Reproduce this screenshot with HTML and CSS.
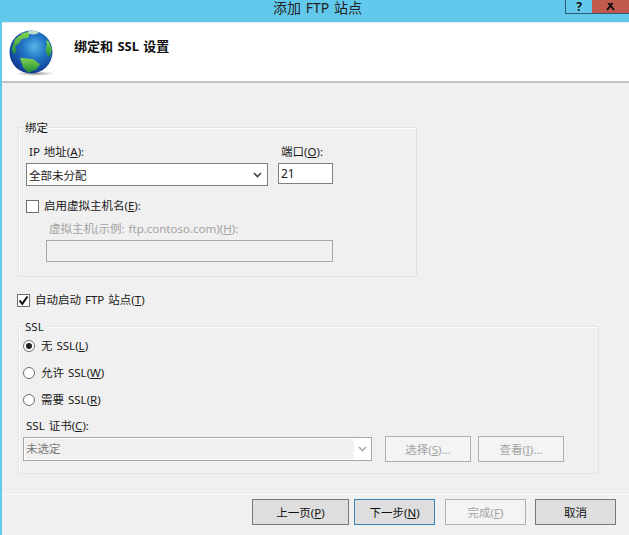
FILE: index.html
```html
<!DOCTYPE html>
<html lang="zh-CN">
<head>
<meta charset="utf-8">
<title>添加 FTP 站点</title>
<link rel="stylesheet" href="styles.css">
</head>
<body>
<div class="window">
  <div class="titlebar">
    <div class="title">添加 FTP 站点</div>
    <div class="caption">
      <div class="cap help">?</div>
      <div class="cap close">
        <svg width="11" height="8" viewBox="0 0 11 8"><path d="M2 -2L9 7M9 -2L2 7" stroke="#111" stroke-width="2" fill="none"/></svg>
      </div>
    </div>
  </div>
  <div class="client">
    <header class="banner">
      <svg class="globe" width="48" height="48" viewBox="0 0 48 48">
        <defs>
          <radialGradient id="ocean" cx="0.58" cy="0.38" r="0.68">
            <stop offset="0" stop-color="#58b4e6"/>
            <stop offset="0.4" stop-color="#2276c6"/>
            <stop offset="0.85" stop-color="#12429a"/>
            <stop offset="1" stop-color="#0d2f7c"/>
          </radialGradient>
          <radialGradient id="shade" cx="0.5" cy="0.5" r="0.5">
            <stop offset="0" stop-color="#555" stop-opacity="0.7"/>
            <stop offset="1" stop-color="#888" stop-opacity="0"/>
          </radialGradient>
          <linearGradient id="land" x1="0" y1="0" x2="0" y2="1">
            <stop offset="0" stop-color="#86d650"/>
            <stop offset="1" stop-color="#1c8a3a"/>
          </linearGradient>
        </defs>
        <ellipse cx="26" cy="45.5" rx="20" ry="2.5" fill="url(#shade)"/>
        <circle cx="22" cy="24" r="21.5" fill="url(#ocean)"/>
        <path d="M2.7 21L6 11.3 14.3 4.7 21 4 19.3 9.7 12.7 11.3 9.3 16.3 6 18 7.7 23 4.3 26.3z" fill="url(#land)"/>
        <path d="M19 3.2L26 2.6 30 5 25 6.5 20 6z" fill="#c4ddc8"/>
        <path d="M37 12L40 14 43 21 41.5 27 39 29 36.5 22 38 17z" fill="url(#land)"/>
        <path d="M11 29.7L24.3 31.3 31 36.3 27.7 41.3 19.3 44.7 14.3 39.7z" fill="url(#land)"/>
      </svg>
      <h1 class="banner-text">绑定和 SSL 设置</h1>
    </header>
    <main class="content">
      <section class="group bind">
        <span class="legend">绑定</span>
        <div class="bind-row">
          <div class="field-ip">
            <label class="lbl ip-lbl">IP 地址(<u>A</u>):</label>
            <div class="select">
              <span>全部未分配</span>
              <svg width="9" height="6" viewBox="0 0 9 6"><path d="M1 1l3.5 3.5L8 1" stroke="#444" stroke-width="1.6" fill="none"/></svg>
            </div>
          </div>
          <div class="field-port">
            <label class="lbl">端口(<u>O</u>):</label>
            <div class="input">21</div>
          </div>
        </div>
        <div class="check-row host-check">
          <span class="box"></span>
          <span class="lbl">启用虚拟主机名(<u>E</u>):</span>
        </div>
        <div class="lbl dim host-lbl">虚拟主机(示例: ftp.contoso.com)(<u>H</u>):</div>
        <div class="input-dis"></div>
      </section>

      <div class="check-row auto">
        <span class="box">
          <svg width="11" height="11" viewBox="0 0 11 11"><path d="M1.5 5.5L4.3 8.8 9.5 1.5" stroke="#111" stroke-width="2" fill="none"/></svg>
        </span>
        <span class="lbl">自动启动 FTP 站点(<u>T</u>)</span>
      </div>

      <section class="group ssl">
        <span class="legend">SSL</span>
        <div class="radio-row first"><span class="radio on"></span><span class="lbl">无 SSL(<u>L</u>)</span></div>
        <div class="radio-row"><span class="radio"></span><span class="lbl">允许 SSL(<u>W</u>)</span></div>
        <div class="radio-row"><span class="radio"></span><span class="lbl">需要 SSL(<u>R</u>)</span></div>
        <div class="lbl cert-lbl">SSL 证书(<u>C</u>):</div>
        <div class="cert-row">
          <div class="select-dis">
            <span class="sel-val">未选定</span>
            <span class="sel-arrow"><svg width="9" height="6" viewBox="0 0 9 6"><path d="M1 1l3.5 3.5L8 1" stroke="#aaa" stroke-width="1.6" fill="none"/></svg></span>
          </div>
          <div class="btn dis cert-btn">选择(<u>S</u>)...</div>
          <div class="btn dis cert-btn">查看(<u>I</u>)...</div>
        </div>
      </section>
    </main>
    <footer class="footer">
      <div class="btn w97">上一页(<u>P</u>)</div>
      <div class="btn w81 default">下一步(<u>N</u>)</div>
      <div class="btn w81 dis">完成(<u>F</u>)</div>
      <div class="btn w81">取消</div>
    </footer>
  </div>
</div>
</body>
</html>
```
FILE: styles.css
```css
* { box-sizing: border-box; }
html, body { margin: 0; padding: 0; }
body {
  width: 629px;
  height: 535px;
  overflow: hidden;
  background: #f0f0f0;
  font-family: "Noto Sans", "Noto Sans CJK SC", sans-serif;
  font-size: 11.5px;
  word-spacing: 1px;
  color: #1a1a1a;
}
.window { display: flex; flex-direction: column; height: 535px; background: #62c9ec; }
.titlebar { position: relative; height: 22px; flex: none; display: flex; justify-content: center; }
.title { font-size: 14px; line-height: 16px; color: #222; margin-left: 6px; }
.caption { position: absolute; top: 0; right: 0; display: flex; }
.cap { height: 14px; display: flex; align-items: flex-end; justify-content: center; }
.help {
  width: 27px;
  border: 1px solid #2c5d70;
  border-top: 0;
  border-right: 0;
  background: #62c9ec;
  font-weight: 700;
  font-size: 12px;
  line-height: 13px;
  color: #111;
}
.close { width: 37px; background: #c25a4f; border-bottom: 1px solid #2c5d70; }
.close svg { margin-bottom: 2px; }
.client { flex: 1; margin-left: 2px; background: #f0f0f0; display: flex; flex-direction: column; min-height: 0; }
.banner {
  height: 61px;
  flex: none;
  background: #fff;
  border-top: 1px solid #dfe8ec;
  border-bottom: 2px solid #c4c4c4;
  display: flex;
  align-items: flex-start;
}
.globe { margin: 5px 0 0 7px; flex: none; }
.banner-text { margin: 14px 0 0 17px; font-size: 13px; line-height: 18px; font-weight: 700; color: #111; }
.content { flex: 1; padding: 44px 0 0 16px; position: relative; }
.group { position: relative; border: 1px solid #dde4e8; border-radius: 2px; background: #f0f0f0; box-shadow: 1px 1px 0 #fff inset; }
.legend { position: absolute; top: -7px; left: 4px; padding: 0 2px; line-height: 14px; background: #f0f0f0; }
.lbl { line-height: 14px; white-space: nowrap; }
.lbl u { text-underline-offset: 1px; }
.bind { width: 399px; height: 150px; padding: 17px 0 0 7px; }
.bind-row { display: flex; gap: 10px; }
.field-ip { width: 242px; }
.field-port { width: 55px; }
.ip-lbl { padding-left: 3px; }
.field-ip .lbl, .field-port .lbl { display: block; margin-bottom: 4px; }
.field-port .lbl { padding-left: 3px; }
.select {
  height: 23px;
  border: 1px solid #7f7f7f;
  background: #fff;
  display: flex;
  align-items: center;
  justify-content: space-between;
  padding: 0 5px 0 2px;
}
.input {
  height: 21px;
  border: 1px solid #7f7f7f;
  background: #fff;
  padding-left: 2px;
  line-height: 19px;
  font-size: 12px;
}
.check-row { display: flex; align-items: center; gap: 5px; }
.box {
  width: 13px;
  height: 13px;
  flex: none;
  border: 1px solid #6f6f6f;
  background: #fff;
  display: flex;
  align-items: center;
  justify-content: center;
}
.host-check { margin-top: 13px; }
.host-lbl { margin: 9px 0 0 23px; }
.dim { color: #a3a3a3; }
.input-dis { width: 287px; height: 22px; margin: 4px 0 0 20px; border: 1px solid #a8a8a8; background: #f0f0f0; }
.auto { margin: 16px 0 0 -1px; height: 14px; }
.ssl { width: 581px; height: 148px; margin-top: 19px; padding: 12px 0 0 4px; }
.radio-row { display: flex; align-items: center; gap: 6px; height: 14px; margin-bottom: 13px; }
.radio {
  width: 12px;
  height: 12px;
  flex: none;
  border-radius: 50%;
  border: 1px solid #6f6f6f;
  background: #fff;
  display: flex;
  align-items: center;
  justify-content: center;
}
.radio.on::after { content: ""; width: 6px; height: 6px; border-radius: 50%; background: #222; }
.cert-lbl { margin: -1px 0 3px 3px; }
.cert-row { display: flex; align-items: flex-start; gap: 13px; height: 26px; }
.select-dis {
  width: 349px;
  height: 24px;
  margin-top: 1px;
  border: 1px solid #a8a8a8;
  background: #fff;
  display: flex;
  align-items: stretch;
  color: #7a7a7a;
  padding: 1px;
}
.sel-val { flex: 1; background: #f0f0f0; padding-left: 1px; line-height: 20px; }
.sel-arrow { width: 16px; display: flex; align-items: center; justify-content: center; }
.cert-row .btn { height: 26px; }
.cert-btn { width: 86px; }
.cert-btn + .cert-btn { margin-left: -6px; }
.footer {
  height: 41px;
  flex: none;
  border-top: 1px solid #fbfbfb;
  display: flex;
  align-items: flex-start;
  padding: 4px 0 0 250px;
}
.btn {
  height: 26px;
  border: 1px solid #7a7a7a;
  background: #dedede;
  display: flex;
  align-items: center;
  justify-content: center;
  white-space: nowrap;
  color: #111;
}
.btn.dis { border-color: #b0b0b0; background: #f4f4f4; color: #a3a3a3; }
.btn.default { border-color: #3c7fb1; }
.w97 { width: 97px; }
.w81 { width: 81px; }
.footer .w97 { margin-right: 5px; }
.footer .default { margin-right: 10px; }
.footer .dis { margin-right: 9px; }
```
